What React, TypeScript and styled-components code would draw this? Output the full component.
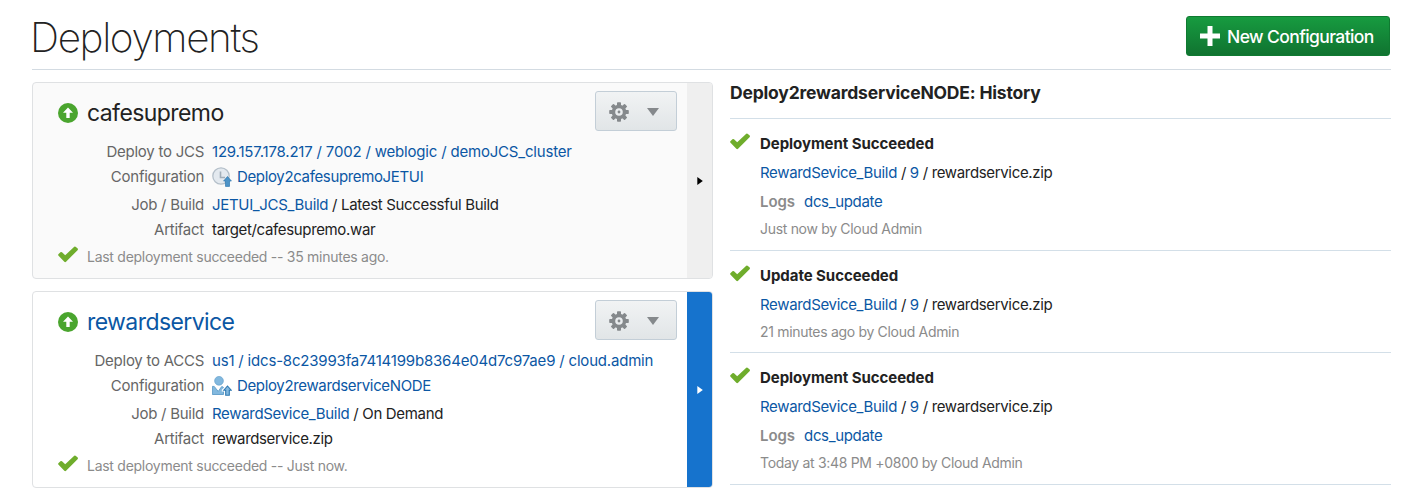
import React from "react";
import styled, { createGlobalStyle } from "styled-components";

const GlobalStyle = createGlobalStyle`
  body {
    margin: 0;
    background: #fff;
    color: #222;
    font-family: Inter, "Liberation Sans", sans-serif;
    font-size: 15px;
    overflow: hidden;
  }
`;

const Page = styled.main`
  width: 1359px;
  height: 494px;
  padding-left: 32px;
  box-sizing: content-box;
`;

const Header = styled.header`
  display: flex;
  justify-content: space-between;
  height: 69px;
  border-bottom: 1px solid #d3dbe2;
`;

const PageTitle = styled.h1`
  margin: 13px 0 0 -2px;
  font-size: 40.5px;
  line-height: 50px;
  font-weight: 200;
  letter-spacing: -1.38px;
`;

const PrimaryButton = styled.button`
  display: flex;
  align-items: center;
  gap: 7px;
  width: 204px;
  height: 40px;
  margin: 16px 1px 0 0;
  padding: 0 0 0 13px;
  border: 1px solid #0f7a31;
  border-radius: 3px;
  background: linear-gradient(#179b40, #107330);
  color: #fff;
  font: 450 17.5px/22px Inter, "Liberation Sans", sans-serif;
  letter-spacing: -0.6px;
  white-space: nowrap;
`;

const ButtonText = styled.span`
  padding-top: 2px;
`;

const Columns = styled.div`
  display: flex;
  gap: 17px;
  padding-top: 12px;
`;

const CardList = styled.section`
  display: flex;
  flex-direction: column;
  gap: 12px;
  width: 681px;
`;

const Card = styled.article<{ $selected?: boolean }>`
  display: flex;
  box-sizing: border-box;
  height: 197px;
  border: 1px solid #dfe1e3;
  border-radius: 4px;
  overflow: hidden;
  background: ${(p) => (p.$selected ? "#fff" : "#fafafa")};
`;

const CardBody = styled.div`
  flex: 1;
  padding: 8px 10px 0 25px;
`;

const CardHead = styled.div`
  display: flex;
  height: 48px;
`;

const CardIcon = styled.span`
  display: flex;
  width: 29px;
  padding-top: 12px;
`;

const CardTitle = styled.h2<{ $link?: boolean }>`
  flex: 1;
  margin: 7px 0 0;
  font-size: 23px;
  line-height: 30px;
  font-weight: 400;
  letter-spacing: -0.58px;
  color: ${(p) => (p.$link ? "#0b57a4" : "#222")};
`;

const MenuButton = styled.button`
  display: flex;
  align-items: center;
  justify-content: space-between;
  box-sizing: border-box;
  width: 82px;
  height: 40px;
  padding: 1px 17px 0 13px;
  border: 1px solid #c3ced7;
  border-radius: 3px;
  background: linear-gradient(#f1f3f4, #e1e5e7);
`;

const Field = styled.div<{ $h: number }>`
  display: flex;
  align-items: center;
  gap: 8px;
  height: ${(p) => p.$h}px;
  white-space: nowrap;
`;

const Label = styled.span`
  width: 146px;
  text-align: right;
  color: #666;
  letter-spacing: -0.26px;
`;

const Value = styled.span<{ $ls?: number }>`
  display: flex;
  align-items: center;
  gap: 5px;
  letter-spacing: ${(p) => p.$ls ?? -0.35}px;
`;

const Link = styled.a`
  color: #0b57a4;
`;

const Status = styled.div`
  display: flex;
  align-items: center;
  gap: 9px;
  height: 30px;
  color: #8b8b8b;
  font-size: 14px;
  letter-spacing: -0.27px;
`;

const StatusIcon = styled.span`
  display: flex;
  padding-bottom: 3px;
`;

const Strip = styled.div<{ $selected?: boolean }>`
  display: flex;
  align-items: center;
  width: 25px;
  padding-left: 10px;
  box-sizing: border-box;
  background: ${(p) => (p.$selected ? "#1673cd" : "#efefef")};
  color: ${(p) => (p.$selected ? "#fff" : "#000")};
`;

const History = styled.section`
  width: 661px;
`;

const HistoryTitle = styled.h3`
  height: 36px;
  margin: 0;
  border-bottom: 1px solid #d3dfe8;
  font-size: 17.5px;
  line-height: 21px;
  font-weight: 650;
  letter-spacing: -0.18px;
`;

const Entry = styled.div<{ $h: number }>`
  display: flex;
  gap: 10px;
  box-sizing: border-box;
  height: ${(p) => p.$h}px;
  padding-top: 10px;
  border-bottom: 1px solid #d3dfe8;
`;

const EntryText = styled.div`
  display: flex;
  flex-direction: column;
`;

const EntryTitle = styled.div`
  height: 29px;
  line-height: 30px;
  font-weight: 650;
  letter-spacing: -0.05px;
`;

const EntryLine = styled.div`
  line-height: 29px;
  letter-spacing: -0.34px;
`;

const LogsLabel = styled.b`
  margin-right: 9px;
  font-weight: 600;
  letter-spacing: -0.05px;
  color: #8b8b8b;
`;

const Time = styled.div`
  line-height: 26px;
  font-size: 14px;
  color: #8b8b8b;
  letter-spacing: -0.31px;
`;

const EntryIcon = styled.span`
  display: flex;
  padding-top: 4px;
`;

const UpIcon = () => (
  <svg width="20" height="20" viewBox="0 0 20 20">
    <circle cx="10" cy="10" r="10" fill="#4aa52e" />
    <path d="M10 4.6 15 9.8H11.7V15H8.3V9.8H5Z" fill="#fff" />
  </svg>
);

const CheckIcon = () => (
  <svg width="20" height="17" viewBox="0 0 20 17">
    <path
      d="M1.4 8.8 3.2 7.2 7.2 10.8 16.8 1.8 18.7 3.3 7.2 14.9Z"
      fill="#6fad2c"
      stroke="#6fad2c"
      strokeWidth="2.4"
      strokeLinejoin="round"
    />
  </svg>
);

const PlusIcon = () => (
  <svg width="20" height="20" viewBox="0 0 20 20">
    <path d="M7.5 0h5v7.5H20v5h-7.5V20h-5v-7.5H0v-5h7.5Z" fill="#fff" />
  </svg>
);

const GearIcon = () => (
  <svg width="20" height="20" viewBox="0 0 20 20">
    <g fill="#85898c">
      {[0, 45, 90, 135].map((a) => (
        <rect key={a} x="8" y="0.2" width="4" height="19.6" rx="0.8" transform={`rotate(${a} 10 10)`} />
      ))}
      <circle cx="10" cy="10" r="7.3" />
    </g>
    <circle cx="10" cy="10" r="3.8" fill="#e9ecee" />
    <circle cx="10" cy="10" r="1.4" fill="#85898c" />
  </svg>
);

const CaretDown = () => (
  <svg width="12" height="8" viewBox="0 0 12 8">
    <path d="M0 0H12L6 8Z" fill="#85898c" />
  </svg>
);

const CaretRight = () => (
  <svg width="6" height="8" viewBox="0 0 6 8">
    <path d="M0.3 0 5.8 4 0.3 8Z" fill="currentColor" />
  </svg>
);

const BadgeArrow = () => (
  <path d="M15.5 9.5 19.4 14H17.5V19.4H13.5V14H11.6Z" fill="#4c93c7" stroke="#2f79b2" strokeWidth="0.7" />
);

const ClockIcon = () => (
  <svg width="20" height="20" viewBox="0 0 20 20">
    <circle cx="9" cy="9" r="8.2" fill="#e3e9ef" stroke="#b5c0ca" strokeWidth="1.3" />
    <path d="M8.5 4.5V10.5H13" fill="none" stroke="#a2aeb9" strokeWidth="1.6" />
    <BadgeArrow />
  </svg>
);

const UserIcon = () => (
  <svg width="20" height="20" viewBox="0 0 20 20">
    <circle cx="7" cy="4.8" r="4.4" fill="#82b8de" stroke="#5c9cc9" strokeWidth="0.6" />
    <path d="M0.4 18.5V10.4H2.2L6.2 15.4 9.8 10.4 11.5 11.4V18.5Z" fill="#82b8de" stroke="#5294c4" strokeWidth="0.8" />
    <path d="M15.5 8 20 13V20H12.2V15.4H9.8V13.8Z" fill="#fff" />
    <path d="M15.5 10 19.2 14.2H17.3V19.2H13.7V14.2H11.8Z" fill="#82b8de" stroke="#2f79b2" strokeWidth="1.1" />
  </svg>
);

type CardData = {
  name: string;
  selected?: boolean;
  target: string;
  targetLabel: string;
  icon: React.ReactNode;
  config: string;
  job: string;
  build: string;
  artifact: string;
  status: string;
};

const cards: CardData[] = [
  {
    name: "cafesupremo",
    targetLabel: "Deploy to JCS",
    target: "129.157.178.217 / 7002 / weblogic / demoJCS_cluster",
    icon: <ClockIcon />,
    config: "Deploy2cafesupremoJETUI",
    job: "JETUI_JCS_Build",
    build: "Latest Successful Build",
    artifact: "target/cafesupremo.war",
    status: "Last deployment succeeded -- 35 minutes ago.",
  },
  {
    name: "rewardservice",
    selected: true,
    targetLabel: "Deploy to ACCS",
    target: "us1 / idcs-8c23993fa7414199b8364e04d7c97ae9 / cloud.admin",
    icon: <UserIcon />,
    config: "Deploy2rewardserviceNODE",
    job: "RewardSevice_Build",
    build: "On Demand",
    artifact: "rewardservice.zip",
    status: "Last deployment succeeded -- Just now.",
  },
];

const entries = [
  { title: "Deployment Succeeded", logs: true, time: "Just now by Cloud Admin" },
  { title: "Update Succeeded", logs: false, time: "21 minutes ago by Cloud Admin" },
  { title: "Deployment Succeeded", logs: true, time: "Today at 3:48 PM +0800 by Cloud Admin" },
];

export default function App() {
  return (
    <Page>
      <GlobalStyle />
      <Header>
        <PageTitle>Deployments</PageTitle>
        <PrimaryButton>
          <PlusIcon />
          <ButtonText>New Configuration</ButtonText>
        </PrimaryButton>
      </Header>
      <Columns>
        <CardList>
          {cards.map((c) => (
            <Card key={c.name} $selected={c.selected}>
              <CardBody>
                <CardHead>
                  <CardIcon>
                    <UpIcon />
                  </CardIcon>
                  <CardTitle $link={c.selected}>{c.name}</CardTitle>
                  <MenuButton>
                    <GearIcon />
                    <CaretDown />
                  </MenuButton>
                </CardHead>
                <Field $h={24}>
                  <Label>{c.targetLabel}</Label>
                  <Value $ls={-0.19}>
                    <Link>{c.target}</Link>
                  </Value>
                </Field>
                <Field $h={27}>
                  <Label>Configuration</Label>
                  <Value>
                    {c.icon}
                    <Link>{c.config}</Link>
                  </Value>
                </Field>
                <Field $h={28}>
                  <Label>Job / Build</Label>
                  <Value $ls={-0.32}>
                    <span>
                      <Link>{c.job}</Link> / {c.build}
                    </span>
                  </Value>
                </Field>
                <Field $h={23}>
                  <Label>Artifact</Label>
                  <Value>{c.artifact}</Value>
                </Field>
                <Status>
                  <StatusIcon>
                    <CheckIcon />
                  </StatusIcon>
                  {c.status}
                </Status>
              </CardBody>
              <Strip $selected={c.selected}>
                <CaretRight />
              </Strip>
            </Card>
          ))}
        </CardList>
        <History>
          <HistoryTitle>Deploy2rewardserviceNODE: History</HistoryTitle>
          {entries.map((e) => (
            <Entry key={e.time} $h={e.logs ? 132 : 102}>
              <EntryIcon>
                <CheckIcon />
              </EntryIcon>
              <EntryText>
                <EntryTitle>{e.title}</EntryTitle>
                <EntryLine>
                  <Link>RewardSevice_Build</Link> / <Link>9</Link> / rewardservice.zip
                </EntryLine>
                {e.logs && (
                  <EntryLine>
                    <LogsLabel>Logs</LogsLabel>
                    <Link>dcs_update</Link>
                  </EntryLine>
                )}
                <Time>{e.time}</Time>
              </EntryText>
            </Entry>
          ))}
        </History>
      </Columns>
    </Page>
  );
}
